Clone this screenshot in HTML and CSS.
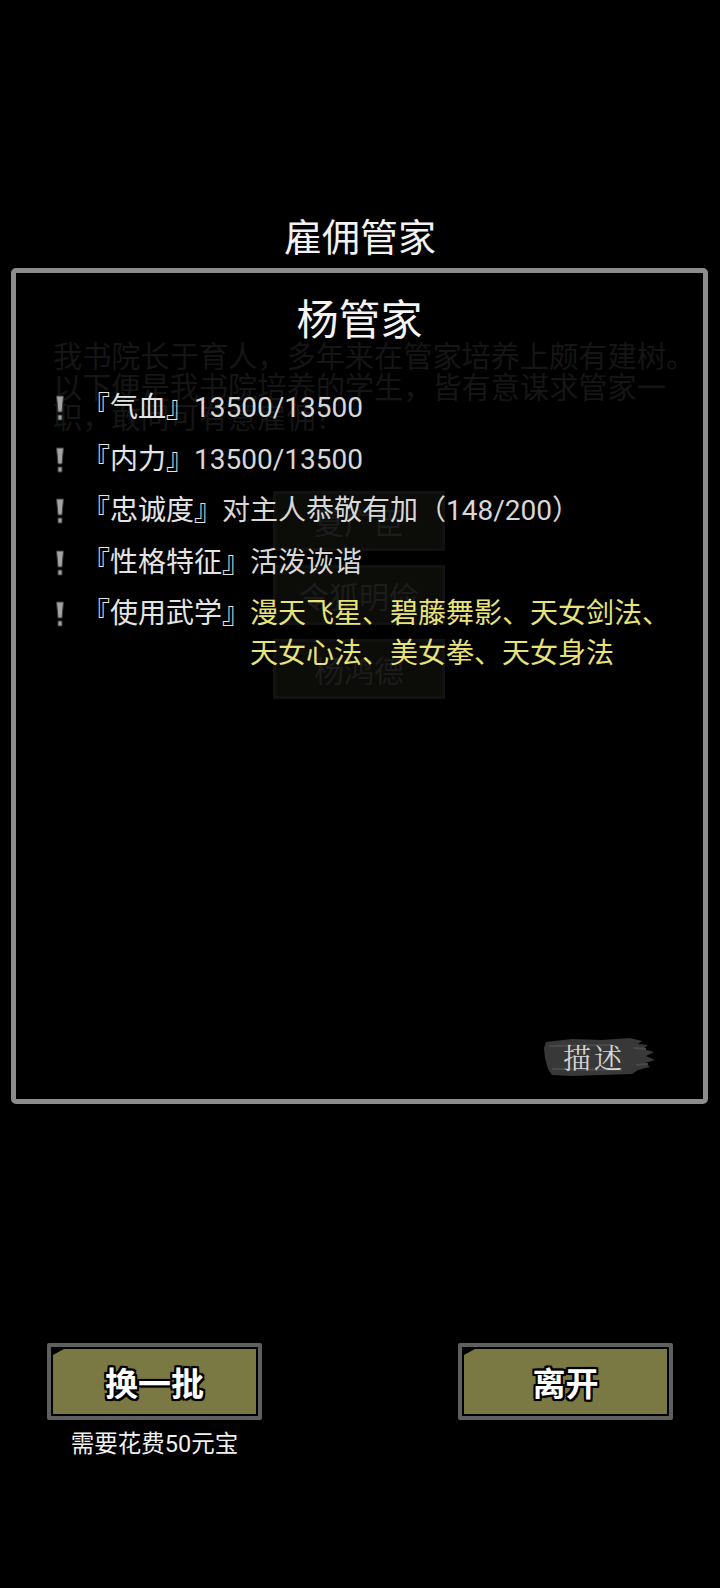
FILE: index.html
```html
<!DOCTYPE html>
<html lang="zh">
<head>
<meta charset="utf-8">
<title>雇佣管家</title>
<link rel="stylesheet" href="styles.css">
</head>
<body>
<div class="screen">
  <h1 class="title">雇佣管家</h1>
  <section class="panel">
    <div class="ghost">
      <p class="ghost-text">我书院长于育人，多年来在管家培养上颇有建树。以下便是我书院培养的学生，皆有意谋求管家一职，敢问可有意雇佣？</p>
      <div class="ghost-list">
        <div class="ghost-btn">夏广臣</div>
        <div class="ghost-btn">令狐明俭</div>
        <div class="ghost-btn">杨鸿德</div>
      </div>
    </div>
    <h2 class="name">杨管家</h2>
    <ul class="stats">
      <li class="row">
        <svg class="bang" viewBox="0 0 10 26" width="10" height="26"><path d="M1.5 1 H8.5 L7 17 H3 Z M3 20 H7 V25 H3 Z" fill="#a3a3a3" stroke="#3a3a3a" stroke-width="1"/></svg>
        <span class="label">『气血』</span><span class="val">13500/13500</span>
      </li>
      <li class="row">
        <svg class="bang" viewBox="0 0 10 26" width="10" height="26"><path d="M1.5 1 H8.5 L7 17 H3 Z M3 20 H7 V25 H3 Z" fill="#a3a3a3" stroke="#3a3a3a" stroke-width="1"/></svg>
        <span class="label">『内力』</span><span class="val">13500/13500</span>
      </li>
      <li class="row">
        <svg class="bang" viewBox="0 0 10 26" width="10" height="26"><path d="M1.5 1 H8.5 L7 17 H3 Z M3 20 H7 V25 H3 Z" fill="#a3a3a3" stroke="#3a3a3a" stroke-width="1"/></svg>
        <span class="label">『忠诚度』</span><span class="val">对主人恭敬有加（148/200）</span>
      </li>
      <li class="row">
        <svg class="bang" viewBox="0 0 10 26" width="10" height="26"><path d="M1.5 1 H8.5 L7 17 H3 Z M3 20 H7 V25 H3 Z" fill="#a3a3a3" stroke="#3a3a3a" stroke-width="1"/></svg>
        <span class="label">『性格特征』</span><span class="val">活泼诙谐</span>
      </li>
      <li class="row">
        <svg class="bang" viewBox="0 0 10 26" width="10" height="26"><path d="M1.5 1 H8.5 L7 17 H3 Z M3 20 H7 V25 H3 Z" fill="#a3a3a3" stroke="#3a3a3a" stroke-width="1"/></svg>
        <span class="label">『使用武学』</span><span class="val skills">漫天飞星、碧藤舞影、天女剑法、天女心法、美女拳、天女身法</span>
      </li>
    </ul>
    <button class="describe">
      <svg class="brush" viewBox="0 0 116 42" width="116" height="42">
        <path d="M4 6 L30 3 L60 4 L88 2 L100 5 L96 8 L106 9 L101 13 L112 16 L104 20 L113 24 L103 27 L108 31 L96 34 L90 38 L60 39 L30 40 L10 39 L6 33 L3 22 L2 12 Z" fill="#383838"/>
        <path d="M8 10 L70 9 M10 33 L80 34 M92 12 L104 13 M94 29 L106 28" stroke="#4a4a4a" stroke-width="2" fill="none"/>
      </svg>
      <span class="describe-text">描述</span>
    </button>
  </section>
  <div class="actions">
    <div class="action">
      <button class="btn"><span class="btn-face">换一批</span></button>
      <p class="cost">需要花费50元宝</p>
    </div>
    <div class="action">
      <button class="btn"><span class="btn-face">离开</span></button>
    </div>
  </div>
</div>
</body>
</html>
```

FILE: styles.css
```css
* { box-sizing: border-box; }

html, body {
  margin: 0;
  padding: 0;
  background: #000;
}

body {
  font-family: "Noto Sans CJK SC", "Noto Sans", sans-serif;
  color: #e8e8e8;
}

.screen {
  width: 720px;
  height: 1588px;
  padding-top: 212px;
  overflow: hidden;
}

.title {
  margin: 0;
  font-size: 38px;
  line-height: 46px;
  font-weight: 400;
  text-align: center;
  color: #f2f2f2;
}

.panel {
  position: relative;
  margin: 10px 0 0 11px;
  width: 697px;
  height: 836px;
  border: 5px solid #8c8c8c;
  border-radius: 5px;
  display: flex;
  flex-direction: column;
}

.ghost {
  position: absolute;
  inset: 0;
  padding: 66px 0 0 37px;
  pointer-events: none;
}

.ghost-text {
  margin: 0;
  width: 650px;
  font-size: 29.2px;
  line-height: 30.5px;
  color: #151515;
}

.ghost-list {
  margin: 60px 0 0 220px;
  display: flex;
  flex-direction: column;
  gap: 14px;
}

.ghost-btn {
  width: 172px;
  height: 60px;
  border: 3px solid #121212;
  background: #0c0c09;
  display: flex;
  align-items: center;
  justify-content: center;
  font-size: 30px;
  color: #1c1c1c;
}

.name {
  position: relative;
  margin: 19px 0 0;
  font-size: 42px;
  line-height: 50px;
  font-weight: 400;
  text-align: center;
  color: #f4f4f4;
}

.stats {
  position: relative;
  list-style: none;
  margin: 46px 0 0;
  padding: 0 0 0 39px;
  display: flex;
  flex-direction: column;
  gap: 11.5px;
}

.row {
  display: flex;
  align-items: flex-start;
  font-family: Roboto, "Noto Sans CJK SC", sans-serif;
  font-size: 28px;
  line-height: 40px;
}

.bang {
  flex: none;
  margin: 7px 17px 0 0;
}

.label {
  flex: none;
  color: #e4e4e4;
}

.val {
  color: #d8d8d8;
}

.skills {
  max-width: 430px;
  color: #e8e27a;
}

.describe {
  position: relative;
  margin: auto 45px 21px auto;
  width: 116px;
  height: 42px;
  padding: 0;
  border: 0;
  background: none;
  display: flex;
  align-items: center;
  justify-content: center;
  font-family: "Noto Serif CJK SC", "Noto Sans CJK SC", serif;
}

.brush {
  position: absolute;
  left: 0;
  top: 0;
}

.describe-text {
  position: relative;
  margin-left: -12px;
  font-size: 28px;
  line-height: 34px;
  color: #d4d4d4;
  letter-spacing: 3px;
}

.actions {
  margin-top: 239px;
  padding: 0 47px;
  display: flex;
  justify-content: space-between;
  align-items: flex-start;
}

.action {
  display: flex;
  flex-direction: column;
  align-items: center;
}

.btn {
  width: 215px;
  height: 77px;
  padding: 2px;
  border: 4px solid #5f5f5f;
  border-radius: 2px;
  background: #000;
  display: flex;
  font-family: inherit;
}

.btn-face {
  flex: 1;
  display: flex;
  align-items: center;
  justify-content: center;
  background: #7a7944;
  clip-path: polygon(11px 0, 100% 0, 100% 100%, 0 100%, 0 6px);
  font-size: 33px;
  font-weight: 700;
  color: #fff;
  text-shadow:
    2px 0 0 #000, -2px 0 0 #000, 0 2px 0 #000, 0 -2px 0 #000,
    2px 2px 0 #000, -2px -2px 0 #000, 2px -2px 0 #000, -2px 2px 0 #000,
    1px 2px 1px #000, -1px -2px 1px #000;
}

.cost {
  margin: 10px 0 0;
  font-family: Roboto, "Noto Sans CJK SC", sans-serif;
  font-size: 23.5px;
  line-height: 28px;
  color: #f0f0f0;
}
```
